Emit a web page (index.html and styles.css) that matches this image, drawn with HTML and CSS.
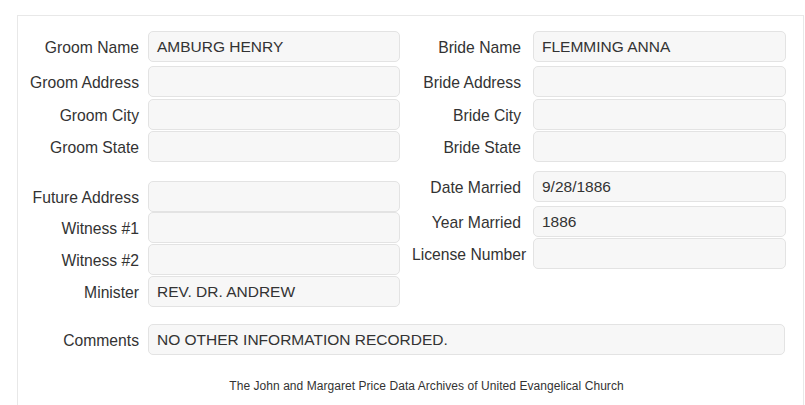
FILE: index.html
```html
<!DOCTYPE html>
<html>
<head>
<meta charset="utf-8">
<link rel="stylesheet" href="styles.css">
</head>
<body>
<div class="panel">
  <div class="cols">
    <div class="col col-left">
      <div class="row"><label>Groom Name</label><div class="field">AMBURG HENRY</div></div>
      <div class="row mt4"><label>Groom Address</label><div class="field"></div></div>
      <div class="row mt2"><label>Groom City</label><div class="field"></div></div>
      <div class="row mt1"><label>Groom State</label><div class="field"></div></div>
      <div class="row mt19"><label>Future Address</label><div class="field"></div></div>
      <div class="row"><label>Witness #1</label><div class="field"></div></div>
      <div class="row mt1"><label>Witness #2</label><div class="field"></div></div>
      <div class="row mt1"><label>Minister</label><div class="field">REV. DR. ANDREW</div></div>
    </div>
    <div class="col col-right">
      <div class="row"><label>Bride Name</label><div class="field">FLEMMING ANNA</div></div>
      <div class="row mt4"><label>Bride Address</label><div class="field"></div></div>
      <div class="row mt2"><label>Bride City</label><div class="field"></div></div>
      <div class="row mt1"><label>Bride State</label><div class="field"></div></div>
      <div class="row mt9"><label>Date Married</label><div class="field">9/28/1886</div></div>
      <div class="row mt4"><label>Year Married</label><div class="field">1886</div></div>
      <div class="row mt1"><label>License Number</label><div class="field"></div></div>
    </div>
  </div>
  <div class="row comments"><label>Comments</label><div class="field wide">NO OTHER INFORMATION RECORDED.</div></div>
  <div class="footer">The John and Margaret Price Data Archives of United Evangelical Church</div>
</div>
</body>
</html>
```
FILE: styles.css
```css
html, body {
  margin: 0;
  padding: 0;
  background: #ffffff;
}
body {
  font-family: "Liberation Sans", Arial, sans-serif;
  color: #333333;
  height: 405px;
  overflow: hidden;
}
.panel {
  margin: 15px 0 0 17px;
  width: 787px;
  height: 390px;
  box-sizing: border-box;
  border: 1px solid #e8e8e8;
  border-bottom: none;
  padding: 15px 0 0 9px;
  overflow: hidden;
}
.cols {
  display: flex;
  gap: 12px;
  align-items: flex-start;
}
.col-left { width: 373px; }
.col-right { width: 374px; }
.row {
  display: flex;
  align-items: center;
}
.row label {
  box-sizing: border-box;
  text-align: right;
  white-space: nowrap;
  font-size: 15.7px;
  padding-top: 3px;
  color: #333333;
}
.col-left label, .comments label { width: 112px; flex: 0 0 112px; margin-right: 9px; }
.col-right label { width: 109px; flex: 0 0 109px; margin-right: 12px; }
.field {
  box-sizing: border-box;
  height: 31px;
  width: 252px;
  flex: 0 0 auto;
  background: #f7f7f7;
  border: 1px solid #e3e3e3;
  border-radius: 5px;
  padding: 0 8px;
  font-size: 15.5px;
  line-height: 29px;
  color: #333333;
  white-space: nowrap;
}
.col-right .field { width: 253px; }
.field.wide { width: 637px; }
.mt1 { margin-top: 1px; }
.mt2 { margin-top: 2px; }
.mt4 { margin-top: 4px; }
.mt9 { margin-top: 9px; }
.mt19 { margin-top: 19px; }
.comments { margin-top: 17px; }
.footer {
  margin-top: 23px;
  padding-left: 23px;
  text-align: center;
  font-size: 12px;
  letter-spacing: 0.05px;
  line-height: 17px;
  color: #333333;
}
```
